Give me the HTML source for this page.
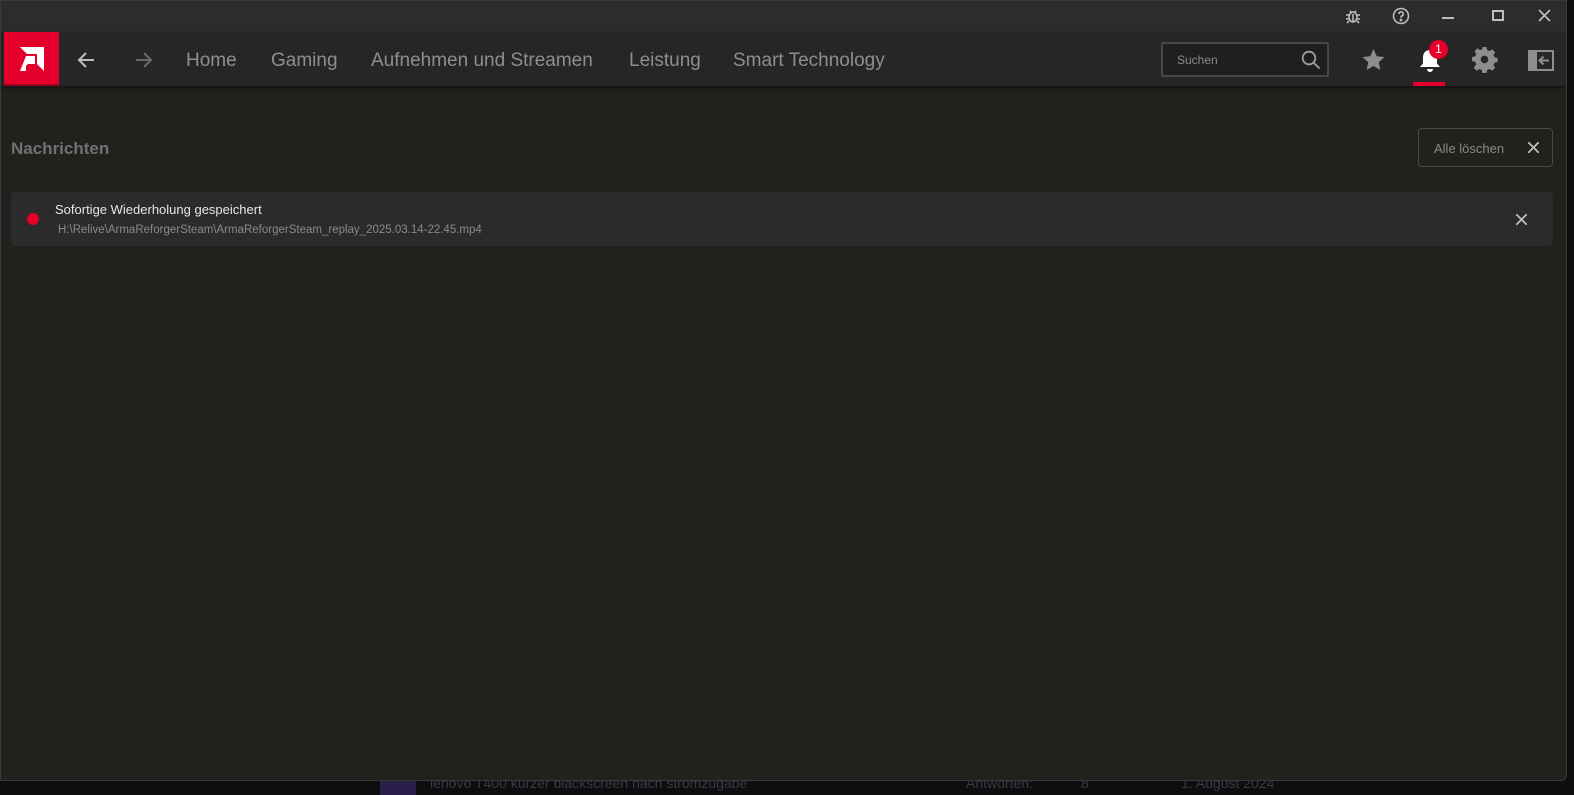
<!DOCTYPE html>
<html><head><meta charset="utf-8"><style>
*{margin:0;padding:0;box-sizing:border-box}
body{width:1574px;height:789px;background:#0e0e10;font-family:"Liberation Sans",sans-serif;position:relative;overflow:hidden}
.win{position:absolute;left:0;top:0;width:1567px;height:781px;background:#21221e;border:1px solid #3a3a3a;border-radius:0 0 6px 0;overflow:hidden}
.title{position:absolute;left:0;top:0;width:100%;height:31px;background:#2c2c2c}
.nav{position:absolute;left:0;top:31px;width:100%;height:54px;background:#262626;box-shadow:0 2px 3px rgba(0,0,0,.4)}
.logo{position:absolute;left:3px;top:31px;width:55px;height:54px;background:#e4002b;border-bottom:2px solid #a0001e}
.nl{position:absolute;top:49px;font-size:19px;color:#8e8e8e}
.ico{position:absolute}
.search{position:absolute;left:1160px;top:41px;width:168px;height:35px;border:2px solid #474747;background:#1f1f1f;border-radius:2px}
.search span{position:absolute;left:14px;top:9px;font-size:12px;color:#8a8a8a}
.h{position:absolute;left:10px;top:138px;font-size:17px;font-weight:bold;color:#717171}
.btn{position:absolute;left:1417px;top:127px;width:135px;height:39px;border:1px solid #4a4a4a;border-radius:4px}
.btn span{position:absolute;left:15px;top:12px;font-size:13px;color:#8a8a8a}
.card{position:absolute;left:10px;top:191px;width:1542px;height:54px;background:#2b2b2b;border-radius:4px}
.dot{position:absolute;left:16px;top:21px;width:12px;height:12px;border-radius:50%;background:#e4002b}
.t1{position:absolute;left:44px;top:10px;font-size:13px;color:#e6e6e6}
.t2{position:absolute;left:47px;top:32px;font-size:11.5px;color:#8a8a8a}
.below{position:absolute;top:775px;font-size:14px;color:#3a3a40}
</style></head><body>
<div class="below" style="left:380px;width:36px;height:14px;background:#2a1e4a;top:781px"></div>
<div class="below" style="left:430px">lenovo T400 kurzer blackscreen nach stromzugabe</div>
<div class="below" style="left:966px">Antworten:</div>
<div class="below" style="left:1081px">8</div>
<div class="below" style="left:1181px">1. August 2024</div>
<div class="win">
<div class="title"></div>
<svg class="ico" style="left:1343px;top:6px" width="18" height="18" viewBox="0 0 18 18" fill="none" stroke="#bdbdbd" stroke-width="1.6"><ellipse cx="9" cy="10" rx="4" ry="5"/><path d="M6 4l2 2M12 4l-2 2M2 8h3M13 8h3M2 12h3M13 12h3M3 16l2-2M15 16l-2-2M9 7v8"/></svg>
<svg class="ico" style="left:1391px;top:6px" width="18" height="18" viewBox="0 0 18 18" fill="none" stroke="#bdbdbd" stroke-width="1.6"><circle cx="9" cy="9" r="7.5"/><path d="M6.8 7a2.2 2.2 0 1 1 3 2c-.7.3-.8.8-.8 1.6"/><circle cx="9" cy="13" r=".6" fill="#bdbdbd"/></svg>
<div class="ico" style="left:1441px;top:16px;width:12px;height:2px;background:#bdbdbd"></div>
<div class="ico" style="left:1491px;top:9px;width:12px;height:11px;border:2px solid #bdbdbd"></div>
<svg class="ico" style="left:1537px;top:8px" width="13" height="13" viewBox="0 0 13 13" stroke="#bdbdbd" stroke-width="1.7"><path d="M1 1l11 11M12 1L1 12"/></svg>
<div class="nav"></div>
<div class="logo"><svg style="position:absolute;left:16px;top:15px" width="26" height="24" viewBox="0 0 26 24" fill="#fff"><path d="M0 0h24v24l-7-7V7H7z"/><path d="M6 9h9v8H8l-2 2v5H0z"/></svg></div>
<svg class="ico" style="left:75px;top:49px" width="20" height="20" viewBox="0 0 20 20" fill="none" stroke="#bdbdbd" stroke-width="2"><path d="M18 10H3M10 3l-7 7 7 7"/></svg>
<svg class="ico" style="left:133px;top:49px" width="20" height="20" viewBox="0 0 20 20" fill="none" stroke="#6a6a6a" stroke-width="2"><path d="M2 10h15M10 3l7 7-7 7"/></svg>
<div class="nl" style="left:185px">Home</div>
<div class="nl" style="left:270px">Gaming</div>
<div class="nl" style="left:370px">Aufnehmen und Streamen</div>
<div class="nl" style="left:628px">Leistung</div>
<div class="nl" style="left:732px">Smart Technology</div>
<div class="search"><span>Suchen</span><svg style="position:absolute;left:138px;top:6px" width="20" height="20" viewBox="0 0 20 20" fill="none" stroke="#a0a0a0" stroke-width="1.8"><circle cx="8" cy="8" r="6.3"/><path d="M12.5 12.5l6 6"/></svg></div>
<svg class="ico" style="left:1360px;top:47px" width="25" height="24" viewBox="0 0 24 24" fill="#8e8e8e"><path d="M12 1l3.3 7.2 7.7.8-5.8 5.2 1.7 7.8L12 18l-6.9 4 1.7-7.8L1 9l7.7-.8z"/></svg>
<svg class="ico" style="left:1415px;top:45px" width="28" height="28" viewBox="0 0 28 28" fill="#fff"><path d="M14 4c-4.5 0-7 3.2-7 7.5v6L4 21h20l-3-3.5v-6C21 7.2 18.5 4 14 4z"/><path d="M11 23h6a3 3 0 0 1-6 0z"/></svg>
<div class="ico" style="left:1428px;top:39px;width:19px;height:19px;border-radius:50%;background:#e4002b;color:#fff;font-size:12px;text-align:center;line-height:19px">1</div>
<div class="ico" style="left:1412px;top:81px;width:32px;height:4px;background:#e4002b"></div>
<svg class="ico" style="left:1471px;top:46px" width="26" height="26" viewBox="0 0 24 24" fill="#8e8e8e"><path d="M10 1h4l.6 3 2.3 1 2.6-1.7 2.8 2.8L20.6 8.7l1 2.3 3 .6v4l-3 .6-1 2.3 1.7 2.6-2.8 2.8-2.6-1.7-2.3 1-.6 3h-4l-.6-3-2.3-1-2.6 1.7-2.8-2.8L4.1 17.5l-1-2.3-3-.6v-4l3-.6 1-2.3L2.4 5.1 5.2 2.3 7.8 4l2.3-1z" transform="translate(0 -1) scale(.96)"/><circle cx="11.5" cy="11.5" r="3.5" fill="#262626"/></svg>
<svg class="ico" style="left:1527px;top:49px" width="26" height="21" viewBox="0 0 26 21"><rect width="26" height="21" fill="#8e8e8e"/><rect x="9" y="2" width="15" height="17" fill="#262626"/><path d="M21 10.5h-9M15.5 6.5l-4 4 4 4" stroke="#8e8e8e" stroke-width="2" fill="none"/></svg>
<div class="h">Nachrichten</div>
<div class="btn"><span>Alle löschen</span><svg style="position:absolute;left:109px;top:13px" width="11" height="11" viewBox="0 0 11 11" stroke="#bdbdbd" stroke-width="1.8"><path d="M0 0l11 11M11 0L0 11"/></svg></div>
<div class="card"><div class="dot"></div><div class="t1">Sofortige Wiederholung gespeichert</div><div class="t2">H:\Relive\ArmaReforgerSteam\ArmaReforgerSteam_replay_2025.03.14-22.45.mp4</div>
<svg style="position:absolute;left:1505px;top:22px" width="11" height="11" viewBox="0 0 11 11" stroke="#bdbdbd" stroke-width="1.8"><path d="M0 0l11 11M11 0L0 11"/></svg></div>
</div>
</body></html>
